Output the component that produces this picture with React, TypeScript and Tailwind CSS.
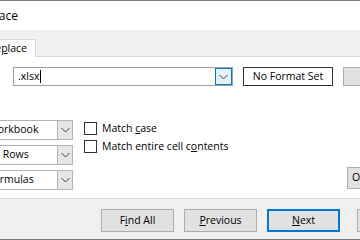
import React from "react";

const Chevron = () => (
  <svg width="9" height="6" viewBox="0 0 9 6" fill="none">
    <polyline points="0.5,1 4.5,5 8.5,1" stroke="#404040" strokeWidth="1" />
  </svg>
);

function Select({ text }: { text: string }) {
  return (
    <div className="flex h-[20px] w-[93px] shrink-0 border border-[#b4b4b4] bg-white">
      <div className="flex flex-1 items-center whitespace-nowrap pl-[7px]">{text}</div>
      <div className="flex w-[15px] items-center justify-center border-l border-[#b4b4b4] bg-[#e6e6e6]">
        <Chevron />
      </div>
    </div>
  );
}

function Btn({ children, w = "w-[73px]", primary = false }: { children: React.ReactNode; w?: string; primary?: boolean }) {
  return (
    <div
      className={`flex h-[23px] shrink-0 items-center justify-center whitespace-nowrap bg-[#e1e1e1] ${w} ${
        primary ? "border-2 border-[#0078d7]" : "border border-[#adadad]"
      }`}
    >
      {children}
    </div>
  );
}

export default function App() {
  return (
    <div
      className="flex h-[240px] w-[360px] flex-col overflow-hidden bg-[#f0f0f0] text-[10.5px] text-black"
      style={{ fontFamily: '"Segoe UI", "Open Sans", sans-serif' }}
    >
      <div className="h-px shrink-0 bg-[#7a7a7a]" />
      {/* title bar */}
      <div className="flex h-[29px] shrink-0 items-center bg-white">
        <div className="flex w-[18px] justify-end whitespace-nowrap text-[12px]">Find and Replace</div>
      </div>
      <div className="h-[9px] shrink-0" />
      {/* tabs */}
      <div className="flex h-[18px] shrink-0">
        <div className="flex w-[36px] shrink-0 items-center justify-end whitespace-nowrap border-r border-t border-[#d9d9d9] bg-white pr-[8px]">
          Re<u>p</u>lace
        </div>
        <div className="flex-1 border-b border-[#d9d9d9]" />
      </div>
      {/* panel */}
      <div className="flex h-[142px] shrink-0 flex-col border-b border-[#d9d9d9] bg-white pt-[10px]">
        <div className="flex shrink-0">
          <div className="ml-[13px] flex h-[19px] w-[220px] shrink-0 border border-[#a0a0a0] bg-white">
            <div className="flex flex-1 items-center pl-[4px]">
              .xlsx<span className="ml-px inline-block h-[13px] w-px bg-black" />
            </div>
            <div className="flex w-[17px] items-center justify-center border border-[#0078d7] bg-[#e5f1fb]">
              <Chevron />
            </div>
          </div>
          <div className="ml-[10px] flex h-[19px] w-[90px] shrink-0 items-center justify-center whitespace-nowrap border border-[#333333] bg-white">
            No Format Set
          </div>
          <div className="ml-[10px] h-[19px] w-[60px] shrink-0 border border-[#adadad] bg-[#e1e1e1]" />
        </div>
        <div className="mt-[34px] flex shrink-0">
          <div className="ml-[-20px] flex shrink-0 flex-col gap-[5px]">
            <Select text="Workbook" />
            <Select text="By Rows" />
            <Select text="Formulas" />
          </div>
          <div className="ml-[11px] flex w-[200px] shrink-0 flex-col gap-[5px] pt-[2px]">
            <div className="flex h-[13px] items-center gap-[5px] whitespace-nowrap">
              <div className="h-[13px] w-[13px] shrink-0 border border-[#333333] bg-white" />
              <span>
                Match <u>c</u>ase
              </span>
            </div>
            <div className="flex h-[13px] items-center gap-[5px] whitespace-nowrap">
              <div className="h-[13px] w-[13px] shrink-0 border border-[#333333] bg-white" />
              <span>
                Match entire cell c<u>o</u>ntents
              </span>
            </div>
          </div>
          <div className="ml-[63px] mt-[47px] shrink-0">
            <div className="flex h-[22px] w-[75px] items-center justify-start whitespace-nowrap border border-[#adadad] bg-[#e1e1e1] pl-[4px]">
              Options &lt;&lt;
            </div>
          </div>
        </div>
      </div>
      {/* bottom buttons */}
      <div className="flex shrink-0 gap-[10px] pl-[101px] pt-[10px]">
        <Btn>
          F<u>i</u>nd All
        </Btn>
        <Btn>
          <u>P</u>revious
        </Btn>
        <Btn primary>
          <u>N</u>ext
        </Btn>
        <div className="ml-[7px]">
          <Btn>Close</Btn>
        </div>
      </div>
      <div className="flex-1" />
      <div className="h-px shrink-0 bg-[#7a7a7a]" />
    </div>
  );
}
